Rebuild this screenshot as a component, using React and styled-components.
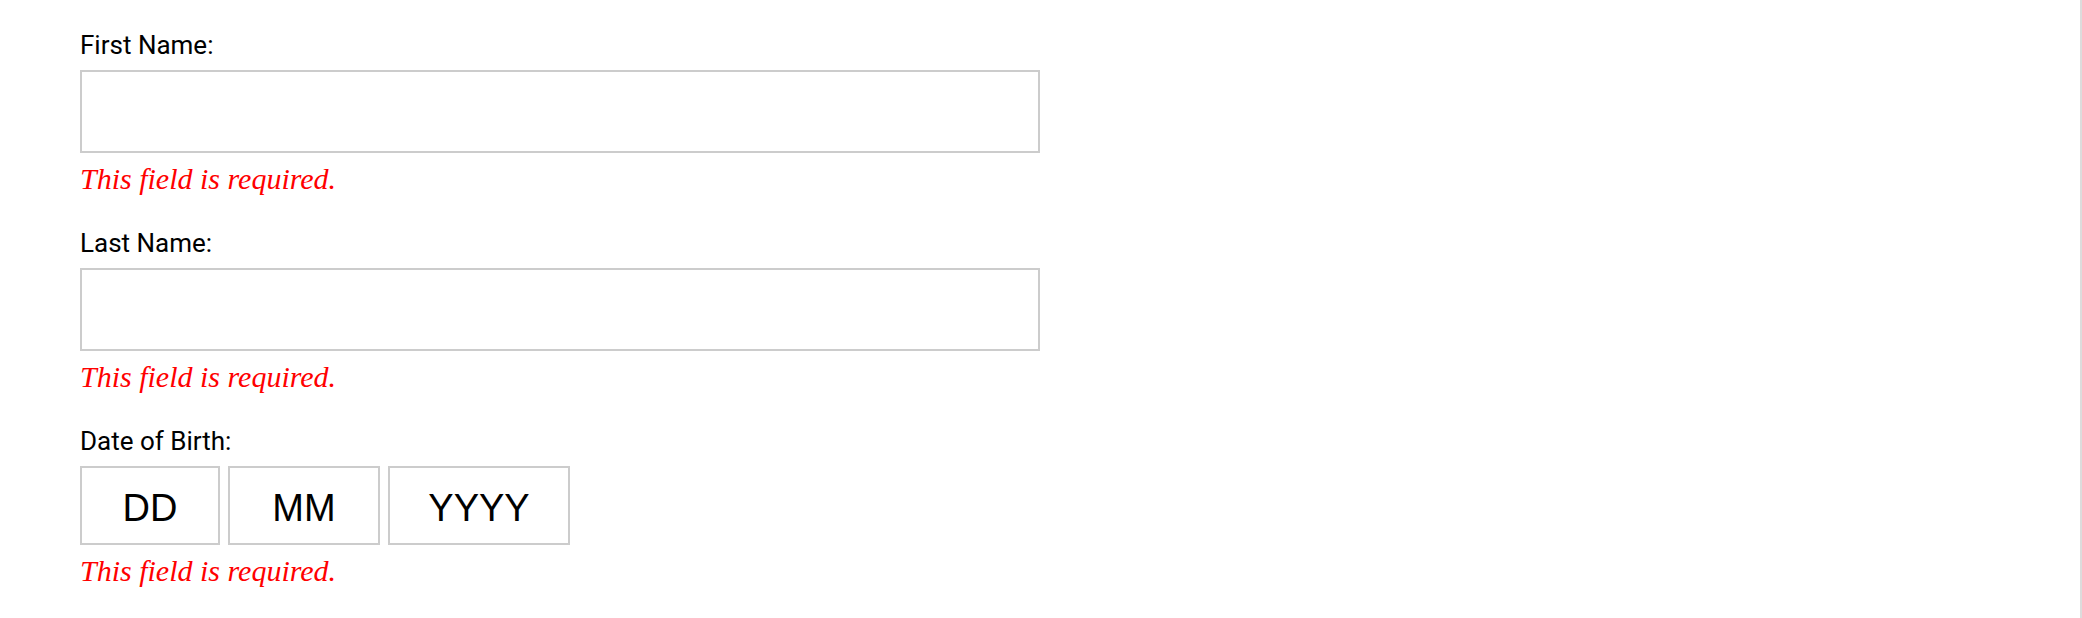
import React from "react"
import styled, { createGlobalStyle } from "styled-components"

const GlobalStyle = createGlobalStyle`
  html, body {
    margin: 0;
    padding: 0;
    background: #fff;
  }
  * {
    box-sizing: border-box;
  }
`

function Field({ label, children }) {
  return (
    <FieldWrap>
      <Label>{label}</Label>
      {children}
      <Error>This field is required.</Error>
    </FieldWrap>
  )
}

function App() {
  return (
    <Page>
      <GlobalStyle />
      <Form onSubmit={(e) => e.preventDefault()}>
        <Field label="First Name:">
          <TextInput type="text" />
        </Field>
        <Field label="Last Name:">
          <TextInput type="text" />
        </Field>
        <Field label="Date of Birth:">
          <DateRow>
            <DateInput width={140} placeholder="DD" />
            <DateInput width={152} placeholder="MM" />
            <DateInput width={182} placeholder="YYYY" />
          </DateRow>
        </Field>
      </Form>
    </Page>
  )
}

const Page = styled.div`
  min-height: 100vh;
  border-right: 2px solid #dcdcdc;
`

const Form = styled.form`
  padding: 30px 0 0 80px;
  display: flex;
  flex-direction: column;
`

const FieldWrap = styled.div`
  display: flex;
  flex-direction: column;
  align-items: flex-start;
  margin-bottom: 31px;
`

const Label = styled.label`
  font-family: Roboto, "Liberation Sans", sans-serif;
  font-size: 26px;
  line-height: 30px;
  color: #000;
  margin-bottom: 10px;
`

const TextInput = styled.input`
  width: 960px;
  height: 83px;
  border: 2px solid #cccccc;
  border-radius: 0;
  background: #fff;
  font-family: "Liberation Sans", Arial, sans-serif;
  font-size: 30px;
  padding: 0 12px;
  outline: none;
`

const DateRow = styled.div`
  display: flex;
  gap: 8px;
`

const DateInput = styled.input`
  width: ${({ width }) => width}px;
  height: 79px;
  border: 2px solid #cccccc;
  border-radius: 0;
  background: #fff;
  font-family: "Liberation Sans", Arial, sans-serif;
  font-size: 38px;
  text-align: center;
  padding: 6px 0 0;
  outline: none;

  &::placeholder {
    color: #000;
    opacity: 1;
  }
`

const Error = styled.div`
  font-family: "Liberation Serif", "Times New Roman", serif;
  font-style: italic;
  font-size: 30px;
  line-height: 36px;
  color: #ff0000;
  margin-top: 8px;
`

export default App
